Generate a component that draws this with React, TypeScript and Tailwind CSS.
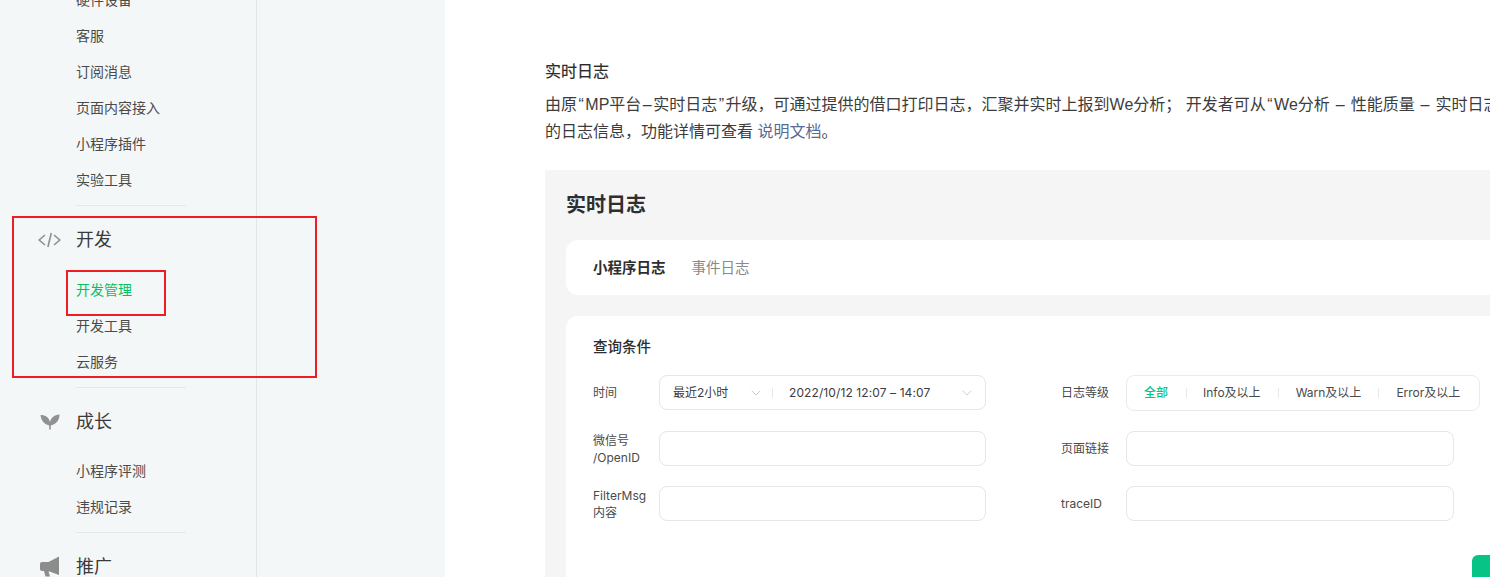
import React from 'react';
import { ChevronDown } from 'lucide-react';

const fontStack = "font-['Liberation_Sans','Noto_Sans_CJK_SC',sans-serif]";
const formFont = "font-['Inter','Noto_Sans_CJK_SC',sans-serif]";

function NavItem({ label, active }: { label: string; active?: boolean }) {
  return (
    <div className={`h-9 pl-[76px] text-[14px] leading-9 whitespace-nowrap ${active ? 'text-[#07c160]' : 'text-[#4a4a4a]'}`}>
      {label}
    </div>
  );
}

function NavDivider() {
  return <div className="ml-[76px] mt-[7px] h-px w-[110px] bg-[#e4e8ea]" />;
}

function NavHeader({ icon, label }: { icon: React.ReactNode; label: string }) {
  return (
    <div className="mt-4 flex h-9 items-center">
      <div className="flex w-[76px] justify-end pr-[15px]">{icon}</div>
      <span className="text-[18px] leading-[38px] text-[#3a3a3a]">{label}</span>
    </div>
  );
}

function CodeIcon() {
  return (
    <svg width="23" height="16" viewBox="0 0 23 16" fill="none" stroke="#8f8f8f" strokeWidth="1.6">
      <path d="M7 3 1.200 8l5.800 5M16 3l5.800 5-5.800 5M13.300 1l-3.400 14" />
    </svg>
  );
}

function SproutIcon() {
  return (
    <svg width="20" height="16" viewBox="0 0 20 16" fill="#919191" className="mr-px">
      <path d="M.5 1C5.500 1 9 3.500 10 8 11 3.500 14.500 .8 19.500 .5 19.500 6 16.500 10 10.800 11.500V15.500H9.200V11.500C3.500 10 1 6 .5 1Z" />
    </svg>
  );
}

function MegaphoneIcon() {
  return (
    <svg width="20" height="21" viewBox="0 0 20 21" fill="#8c8c8c" className="-mt-0.5 mr-px">
      <path d="M19 0.500V19L9.500 15.500H8.500L10 20.500H5.500L4 15H2C.9 15 0 14 0 13V8C0 6.900 .9 6 2 6H8.500Z" />
    </svg>
  );
}

function LogLevel() {
  const levels = ['Info及以上', 'Warn及以上', 'Error及以上'];
  return (
    <div className="-my-px flex h-9 w-[354px] items-center rounded-lg border border-[#ebebeb] pl-[17px] text-[12px] text-[#4a4a4a]">
      <span className="font-medium text-[#07c58a]">全部</span>
      {levels.map((level, i) => (
        <React.Fragment key={level}>
          <span className={`h-[10px] w-px bg-[#e8e8e8] ${i === 0 ? 'ml-[18px] mr-[16px]' : 'ml-[17px] mr-[17px]'}`} />
          <span className="whitespace-nowrap">{level}</span>
        </React.Fragment>
      ))}
    </div>
  );
}

function TextField({ width }: { width: string }) {
  return <div className={`h-[35px] rounded-lg border border-[#e6e6e6] bg-white ${width}`} />;
}

function FieldLabel({ children, width }: { children: React.ReactNode; width: string }) {
  return <div className={`shrink-0 text-[12px] leading-[17px] text-[#4a4a4a] ${width}`}>{children}</div>;
}

// the quotes and dashes sit a bit wider in the reference font
function Wide({ children }: { children: React.ReactNode }) {
  return <span className="mx-[1.500px]">{children}</span>;
}

export default function App() {
  return (
    <div className={`relative flex h-[577px] w-[1490px] overflow-hidden bg-white ${fontStack}`}>
      {/* Sidebar */}
      <div className="flex h-full w-[445px] shrink-0 bg-[#f4f7f8]">
        <nav className="-mt-[18px] h-[620px] w-[257px] shrink-0 border-r border-[#e3e6e8]">
          <NavItem label="硬件设备" />
          <NavItem label="客服" />
          <NavItem label="订阅消息" />
          <NavItem label="页面内容接入" />
          <NavItem label="小程序插件" />
          <NavItem label="实验工具" />
          <NavDivider />
          <NavHeader icon={<CodeIcon />} label="开发" />
          <div className="mt-[14px]">
            <NavItem label="开发管理" active />
            <NavItem label="开发工具" />
            <NavItem label="云服务" />
          </div>
          <NavDivider />
          <NavHeader icon={<SproutIcon />} label="成长" />
          <div className="mt-[13px]">
            <NavItem label="小程序评测" />
            <NavItem label="违规记录" />
          </div>
          <NavDivider />
          <NavHeader icon={<MegaphoneIcon />} label="推广" />
        </nav>
      </div>

      {/* Main */}
      <main className="min-w-0 flex-1 pl-[100px] pt-[60px]">
        <h3 className="text-[16px] leading-6 text-[#2b2b2b] [-webkit-text-stroke:0.2px_#2b2b2b]">实时日志</h3>
        <p className="mt-[7px] whitespace-nowrap text-[16px] leading-[27px] text-[#3c3c3c]">
          由原<Wide>“</Wide>MP平台<Wide>–</Wide>实时日志<Wide>”</Wide>升级，可通过提供的借口打印日志，汇聚并实时上报到We分析； 开发者可从<Wide>“</Wide>We分析 <Wide>–</Wide> 性能质量 <Wide>–</Wide> 实时日志”查看小程序
          <br />
          的日志信息，功能详情可查看 <span className="text-[#576b95]">说明文档</span>。
        </p>

        <div className={`mt-[25px] w-[1000px] bg-[#f5f5f5] pl-[21px] pt-5 ${formFont}`}>
          <h2 className="h-[30px] text-[20px] font-semibold leading-[30px] text-[#2e2e2e]">实时日志</h2>
          <div className="mt-5 flex h-[55px] items-center gap-[26px] rounded-l-xl bg-white pl-[27px] text-[14.500px]">
            <span className="font-semibold text-[#2e2e2e]">小程序日志</span>
            <span className="text-[#8a8a8a]">事件日志</span>
          </div>
          <div className="mt-[21px] h-[300px] rounded-l-xl bg-white pl-[27px] pt-[21px]">
            <div className="text-[14.500px] font-medium leading-5 text-[#2e2e2e]">查询条件</div>
            <div className="mt-[18px] flex items-center">
              <FieldLabel width="w-[66px]">时间</FieldLabel>
              <div className="flex h-[35px] w-[327px] items-center rounded-lg border border-[#e6e6e6] pl-[13px] text-[12px] text-[#3c3c3c]">
                <span className="w-[76px] whitespace-nowrap">最近2小时</span>
                <ChevronDown size={16} strokeWidth={1} className="-ml-px text-[#b5b5b5]" />
                <span className="ml-2 h-[10px] w-px bg-[#e8e8e8]" />
                <span className="ml-4 w-[170px] whitespace-nowrap tracking-[0.1px]">2022/10/12 12:07 – 14:07</span>
                <ChevronDown size={16} strokeWidth={1} className="text-[#b5b5b5]" />
              </div>
              <FieldLabel width="ml-[75px] w-[65px]">日志等级</FieldLabel>
              <LogLevel />
            </div>
            <div className="mt-[21px] flex items-center">
              <FieldLabel width="w-[66px]">
                微信号
                <br />
                /OpenID
              </FieldLabel>
              <TextField width="w-[327px]" />
              <FieldLabel width="ml-[75px] w-[65px]">页面链接</FieldLabel>
              <TextField width="w-[328px]" />
            </div>
            <div className="mt-5 flex items-center">
              <FieldLabel width="w-[66px]">
                FilterMsg
                <br />
                内容
              </FieldLabel>
              <TextField width="w-[327px]" />
              <FieldLabel width="ml-[75px] w-[65px]">traceID</FieldLabel>
              <TextField width="w-[328px]" />
            </div>
            <div className="ml-[879px] mt-[34px] h-10 w-16 rounded-md bg-[#07c385]" />
          </div>
        </div>
      </main>

      {/* Red annotation boxes */}
      <div className="absolute left-3 top-[216px] h-[162px] w-[305px] border-2 border-[#ee1c25]" />
      <div className="absolute left-[66px] top-[270px] h-[46px] w-[100px] border-2 border-[#ee1c25]" />
    </div>
  );
}
